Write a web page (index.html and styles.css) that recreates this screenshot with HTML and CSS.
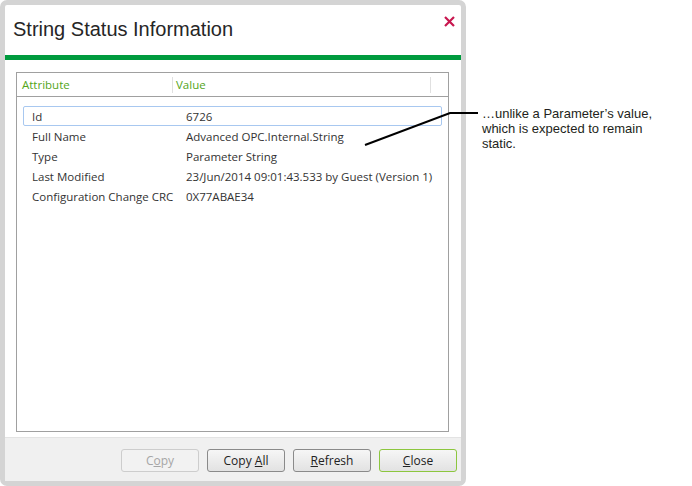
FILE: index.html
```html
<!DOCTYPE html>
<html lang="en">
<head>
  <meta charset="UTF-8" />
  <title>String Status Information</title>
  <link rel="stylesheet" href="styles.css">
</head>
<body>

<div class="page">
  <div class="dialog">
    <div class="titlebar">
      <h1 class="title">String Status Information</h1>
      <span class="close-x">
        <svg width="11" height="11" viewBox="0 0 11 11"><path d="M1 1L10 10M10 1L1 10" stroke="#c8174f" stroke-width="2.2"/></svg>
      </span>
    </div>
    <div class="greenbar"></div>

    <div class="content">
      <div class="grid">
        <div class="grid-head">
          <div class="col-attr">Attribute</div>
          <div class="col-val">Value</div>
          <div class="col-end"></div>
        </div>
        <div class="rows">
          <div class="row selected"><span class="name">Id</span><span class="value">6726</span></div>
          <div class="row"><span class="name">Full Name</span><span class="value">Advanced OPC.Internal.String</span></div>
          <div class="row"><span class="name">Type</span><span class="value">Parameter String</span></div>
          <div class="row"><span class="name">Last Modified</span><span class="value">23/Jun/2014 09:01:43.533 by Guest (Version 1)</span></div>
          <div class="row"><span class="name">Configuration Change CRC</span><span class="value">0X77ABAE34</span></div>
        </div>
      </div>
    </div>

    <div class="footer">
      <button class="btn" disabled>C<u>o</u>py</button>
      <button class="btn">Copy <u>A</u>ll</button>
      <button class="btn"><u>R</u>efresh</button>
      <button class="btn default"><u>C</u>lose</button>
    </div>
  </div>

  <div class="note">…unlike a Parameter’s value, which is expected to remain static.</div>

  <svg class="callout" width="692" height="486">
    <path d="M365 145L450 113H478" fill="none" stroke="#000" stroke-width="2"/>
  </svg>
</div>

</body>
</html>
```

FILE: styles.css
```css
body {
  margin: 0;
  background: #fff;
  font-family: 'Open Sans', sans-serif;
}

.page {
  position: relative;
  display: flex;
  width: 692px;
  height: 486px;
}

.dialog {
  width: 456px;
  height: 476px;
  border: 5px solid #d4d4d4;
  border-radius: 7px;
  background: #fff;
  display: flex;
  flex-direction: column;
  flex-shrink: 0;
}

.titlebar {
  height: 50px;
  display: flex;
  align-items: flex-start;
  justify-content: space-between;
}

.title {
  margin: 13px 0 0 8px;
  font-family: 'Liberation Sans', Arial, sans-serif;
  font-weight: normal;
  font-size: 20px;
  color: #262626;
}

.close-x {
  margin: 5px 6px 0 0;
}

.greenbar {
  height: 5px;
  background: #009b3e;
}

.content {
  flex: 1;
  padding: 12px 12px 5px 11px;
  display: flex;
}

.grid {
  flex: 1;
  border: 1px solid #a0a0a0;
  font-size: 11.5px;
  color: #333;
}

.grid-head {
  display: flex;
  height: 23px;
  border-bottom: 1px solid #a0a0a0;
  color: #54a51a;
  align-items: center;
}

.col-attr {
  width: 150px;
  padding-left: 5px;
}

.col-val {
  flex: 1;
  border-left: 1px solid #e0e0e0;
  padding-left: 3px;
  line-height: 16px;
}

.col-end {
  width: 17px;
  height: 16px;
  border-left: 1px solid #e0e0e0;
}

.rows {
  padding: 9px 6px 0 6px;
}

.row {
  display: flex;
  height: 20px;
  padding-top: 1px;
  align-items: center;
  border: 1px solid transparent;
  border-radius: 2px;
  box-sizing: border-box;
}

.row.selected {
  border-color: #a8c8f0;
}

.name {
  width: 154px;
  padding-left: 8px;
  flex-shrink: 0;
}

.footer {
  height: 43px;
  border-top: 1px solid #e3e3e3;
  background: #f0f0f0;
  display: flex;
  justify-content: flex-end;
  align-items: center;
  gap: 8px;
  padding-right: 4px;
}

.btn {
  width: 78px;
  height: 23px;
  margin-top: 1px;
  font-family: 'Open Sans', sans-serif;
  font-size: 12px;
  color: #222;
  border: 1px solid #8a8a8a;
  border-radius: 3px;
  background: linear-gradient(#f6f6f6, #e2e2e2);
  padding: 0;
}

.btn:disabled {
  color: #a6a6a6;
  border-color: #cdcdcd;
  background: #f2f2f2;
}

.btn.default {
  border-color: #8cc63e;
}

.note {
  width: 176px;
  margin: 106px 0 0 16px;
  font-family: 'Liberation Sans', Arial, sans-serif;
  font-size: 13px;
  line-height: 15px;
  color: #231f20;
}

.callout {
  position: absolute;
  left: 0;
  top: 0;
  pointer-events: none;
}
```
